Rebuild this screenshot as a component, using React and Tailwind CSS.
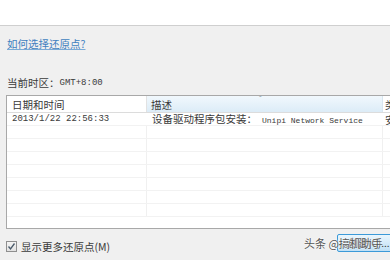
import React from 'react';

const cjk = { fontFamily: '"Noto Sans CJK SC", "Liberation Sans", sans-serif' };
const mono = { fontFamily: '"Liberation Mono", "Noto Sans CJK SC", monospace' };

const rows = [
    { date: '2013/1/22 22:56:33', desc: '设备驱动程序包安装：', descEn: 'Unipi Network Service', type: '安' },
];

const App = () => {
    const emptyRows = Array.from({ length: 7 });

    return (
        <div className="w-[390px] h-[260px] overflow-hidden bg-[#f0f0f0] text-[#3a3a3a] relative" style={cjk}>
            <div className="h-[26px] bg-white border-b border-[#cfcfcf]"></div>

            <div className="pl-[7px] pt-[11px] text-[10.5px] leading-[14px]">
                <span className="text-[#3f7fbf] underline decoration-[#7aaad6]">如何选择还原点?</span>
            </div>

            <div className="pl-[7px] mt-[25px] text-[10.5px] leading-[14px] flex items-center">
                <span>当前时区：</span>
                <span className="text-[9px]" style={mono}>GMT+8:00</span>
            </div>

            <div className="ml-[6px] mt-[5px] w-[400px] h-[134px] bg-white border-l border-b border-t border-[#a8a8a8] flex flex-col">
                <div className="flex h-[17px] border-b border-[#dcdcdc] text-[10.5px] leading-[17px] shrink-0">
                    <div className="w-[140px] pl-[5px] border-r border-[#e2e2e2] shrink-0">日期和时间</div>
                    <div className="w-[236px] pl-[4px] shrink-0 relative border-r border-[#d8e6f0] bg-gradient-to-b from-[#f1f8fd] to-[#dcecf7]">
                        描述
                        <span className="absolute left-[112px] top-[-3px] text-[8px] leading-[10px] text-[#8a9aa8]">ˆ</span>
                    </div>
                    <div className="pl-[2px]">类</div>
                </div>

                {rows.map((r) => (
                    <div key={r.date} className="flex h-[13px] border-b border-[#f2f2f2] text-[10.5px] leading-[13px] items-center shrink-0">
                        <div className="w-[140px] pl-[5px] shrink-0 text-[9px]" style={mono}>{r.date}</div>
                        <div className="w-[236px] pl-[5px] shrink-0 whitespace-nowrap">
                            {r.desc}
                            <span className="ml-[5px] text-[8px]" style={mono}>{r.descEn}</span>
                        </div>
                        <div className="pl-[2px]">{r.type}</div>
                    </div>
                ))}

                {emptyRows.map((_, i) => (
                    <div key={i} className="flex h-[13px] border-b border-[#f2f2f2] shrink-0">
                        <div className="w-[140px] shrink-0 border-r border-[#f0f0f0]"></div>
                        <div className="w-[236px] shrink-0 border-r border-[#f0f0f0]"></div>
                    </div>
                ))}
            </div>

            <div className="flex items-center pl-[6px] mt-[10px] text-[10.5px]">
                <div className="w-[11px] h-[11px] border border-[#8f8f8f] bg-gradient-to-b from-[#f4f4f4] to-[#e2e2e2] flex items-center justify-center">
                    <svg width="9" height="9" viewBox="0 0 9 9">
                        <path d="M1.5 4.5 L3.5 7 L7.5 1.5" stroke="#4a5a6a" strokeWidth="1.3" fill="none" />
                    </svg>
                </div>
                <span className="ml-[4px]">显示更多还原点(M)</span>
            </div>

            <div className="absolute left-[337px] top-[234px] w-[60px] h-[18px] border border-[#3c9ad8] rounded-[2px] bg-gradient-to-b from-[#eaf6fd] to-[#bfe0f5] text-[10px] leading-[16px] pl-[10px] text-[#333]">
                创建(C)...
            </div>
            <div className="absolute left-[304px] top-[235px] text-[11px] leading-[16px] text-[#555] whitespace-nowrap" style={{ textShadow: '0 0 2px #fff, 0 0 2px #fff' }}>
                头条 @搞机助手
            </div>
        </div>
    );
};

export default App;
